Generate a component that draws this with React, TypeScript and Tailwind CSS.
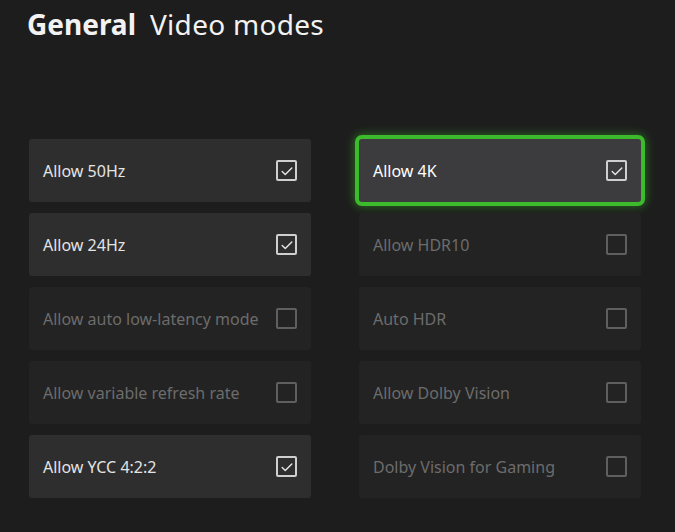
import React from 'react';

type Setting = {
  label: string;
  checked: boolean;
  enabled: boolean;
  focused?: boolean;
};

const left: Setting[] = [
  { label: 'Allow 50Hz', checked: true, enabled: true },
  { label: 'Allow 24Hz', checked: true, enabled: true },
  { label: 'Allow auto low-latency mode', checked: false, enabled: false },
  { label: 'Allow variable refresh rate', checked: false, enabled: false },
  { label: 'Allow YCC 4:2:2', checked: true, enabled: true },
];

const right: Setting[] = [
  { label: 'Allow 4K', checked: true, enabled: true, focused: true },
  { label: 'Allow HDR10', checked: false, enabled: false },
  { label: 'Auto HDR', checked: false, enabled: false },
  { label: 'Allow Dolby Vision', checked: false, enabled: false },
  { label: 'Dolby Vision for Gaming', checked: false, enabled: false },
];

const CheckBox: React.FC<{ checked: boolean; enabled: boolean }> = ({ checked, enabled }) => (
  <div
    className={`w-[21px] h-[21px] shrink-0 border-2 rounded-[2px] flex items-center justify-center ${
      enabled ? 'border-[#cfcfcf]' : 'border-[#5f5f5f]'
    }`}
  >
    {checked && (
      <svg viewBox="0 0 16 16" className="w-[14px] h-[14px]" fill="none">
        <path d="M2.5 8.5 L6 12 L13.5 4.5" stroke="#e6e6e6" strokeWidth="1.6" strokeLinecap="round" strokeLinejoin="round" />
      </svg>
    )}
  </div>
);

const Tile: React.FC<{ item: Setting }> = ({ item }) => {
  let box = 'bg-[#232323]';
  if (item.enabled) box = 'bg-[#2e2e2f]';
  if (item.focused) box = 'bg-[#3c3b3d] shadow-[0_0_0_4px_#3cbc2c,0_0_10px_5px_rgba(60,190,40,0.45)]';

  return (
    <div className={`h-[63px] rounded-[3px] flex items-center justify-between pl-[14px] pr-[14px] ${box}`}>
      <span className={`text-[16px] ${item.focused ? 'text-white' : item.enabled ? 'text-[#e4e4e4]' : 'text-[#6c6c6c]'}`}>
        {item.label}
      </span>
      <CheckBox checked={item.checked} enabled={item.enabled} />
    </div>
  );
};

export default function App() {
  return (
    <div
      className="w-[675px] h-[532px] bg-[#1d1d1d] overflow-hidden"
      style={{ fontFamily: '"Noto Sans", "Open Sans", sans-serif' }}
    >
      <div className="pl-[27px] pt-[3px] flex items-baseline gap-[14px] text-[28px] text-[#f2f2f2]">
        <span className="font-bold">General</span>
        <span className="tracking-[0.3px]">Video modes</span>
      </div>

      <div className="mt-[94px] ml-[29px] w-[612px] grid grid-cols-2 gap-x-[48px]">
        <div className="flex flex-col gap-[11px]">
          {left.map((item) => (
            <Tile key={item.label} item={item} />
          ))}
        </div>
        <div className="flex flex-col gap-[11px]">
          {right.map((item) => (
            <Tile key={item.label} item={item} />
          ))}
        </div>
      </div>
    </div>
  );
}
